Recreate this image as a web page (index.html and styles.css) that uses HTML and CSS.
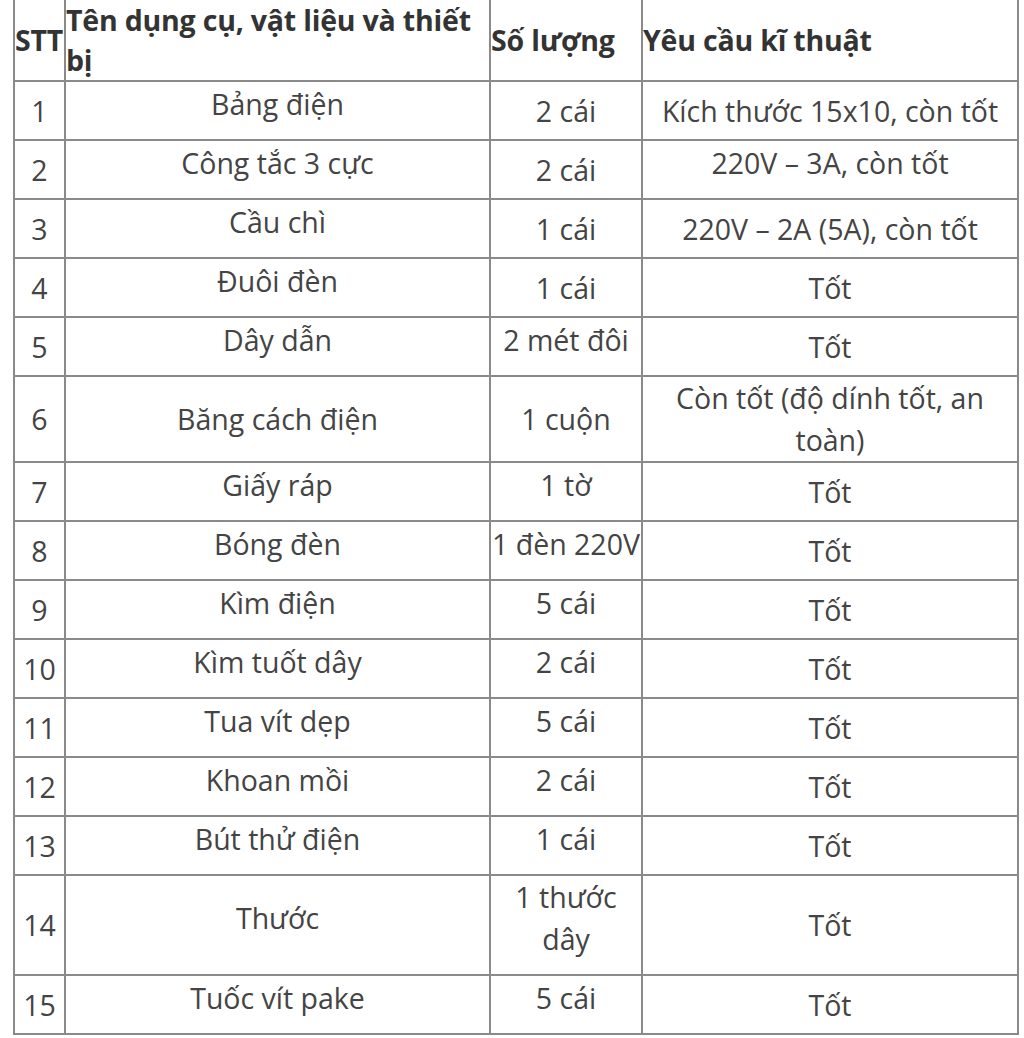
FILE: index.html
```html
<!DOCTYPE html>
<html lang="vi">
<head>
<meta charset="utf-8">
<title>Dụng cụ, vật liệu và thiết bị</title>
<link rel="stylesheet" href="styles.css">
</head>
<body>
<table class="tbl">
  <colgroup>
    <col class="c-stt">
    <col class="c-name">
    <col class="c-qty">
    <col class="c-req">
  </colgroup>
  <thead>
    <tr class="head">
      <th class="h-stt">STT</th>
      <th>Tên dụng cụ, vật liệu và thiết bị</th>
      <th>Số lượng</th>
      <th>Yêu cầu kĩ thuật</th>
    </tr>
  </thead>
  <tbody>
    <tr><td>1</td><td class="up">Bảng điện</td><td>2 cái</td><td>Kích thước 15x10, còn tốt</td></tr>
    <tr><td>2</td><td class="up">Công tắc 3 cực</td><td>2 cái</td><td class="up">220V – 3A, còn tốt</td></tr>
    <tr><td>3</td><td class="up">Cầu chì</td><td>1 cái</td><td>220V – 2A (5A), còn tốt</td></tr>
    <tr><td>4</td><td class="up">Đuôi đèn</td><td>1 cái</td><td>Tốt</td></tr>
    <tr><td>5</td><td class="up">Dây dẫn</td><td class="up">2 mét đôi</td><td>Tốt</td></tr>
    <tr class="r-six"><td>6</td><td>Băng cách điện</td><td>1 cuộn</td><td>Còn tốt (độ dính tốt, an toàn)</td></tr>
    <tr><td>7</td><td class="up">Giấy ráp</td><td class="up">1 tờ</td><td>Tốt</td></tr>
    <tr><td>8</td><td class="up">Bóng đèn</td><td class="up">1 đèn 220V</td><td>Tốt</td></tr>
    <tr><td>9</td><td class="up">Kìm điện</td><td class="up">5 cái</td><td>Tốt</td></tr>
    <tr><td>10</td><td class="up">Kìm tuốt dây</td><td class="up">2 cái</td><td>Tốt</td></tr>
    <tr><td>11</td><td class="up">Tua vít dẹp</td><td class="up">5 cái</td><td>Tốt</td></tr>
    <tr><td>12</td><td class="up">Khoan mồi</td><td class="up">2 cái</td><td>Tốt</td></tr>
    <tr><td>13</td><td class="up">Bút thử điện</td><td class="up">1 cái</td><td>Tốt</td></tr>
    <tr class="r-fourteen"><td>14</td><td class="up">Thước</td><td class="up">1 thước dây</td><td>Tốt</td></tr>
    <tr><td>15</td><td class="up">Tuốc vít pake</td><td class="up">5 cái</td><td>Tốt</td></tr>
  </tbody>
</table>
</body>
</html>
```

FILE: styles.css
```css
html, body {
  margin: 0;
  padding: 0;
  background: #ffffff;
}

body {
  font-family: "Open Sans", "Noto Sans", sans-serif;
  color: #444444;
}

.tbl {
  margin-left: 13px;
  width: 1004px;
  table-layout: fixed;
  border-collapse: collapse;
  font-size: 28.5px;
}

.c-stt { width: 51px; }
.c-name { width: 425px; }
.c-qty { width: 152px; }
.c-req { width: 376px; }

.tbl th,
.tbl td {
  border: 2px solid #8a8a8a;
  padding: 0;
  vertical-align: middle;
}

.tbl th {
  text-align: left;
  font-weight: 700;
  color: #333333;
  line-height: 40px;
  letter-spacing: -0.2px;
}

.head {
  height: 76px;
}

.tbl thead th {
  border-top: none;
  padding-bottom: 0;
}

.h-stt {
  text-align: center;
  letter-spacing: -0.6px;
}

.tbl td {
  text-align: center;
  line-height: 42px;
}

.tbl tbody tr {
  height: 59px;
}

.tbl tbody tr.r-six {
  height: 84px;
}

.tbl tbody tr.r-fourteen {
  height: 98px;
}

.tbl td.up {
  padding-bottom: 14px;
}
```
